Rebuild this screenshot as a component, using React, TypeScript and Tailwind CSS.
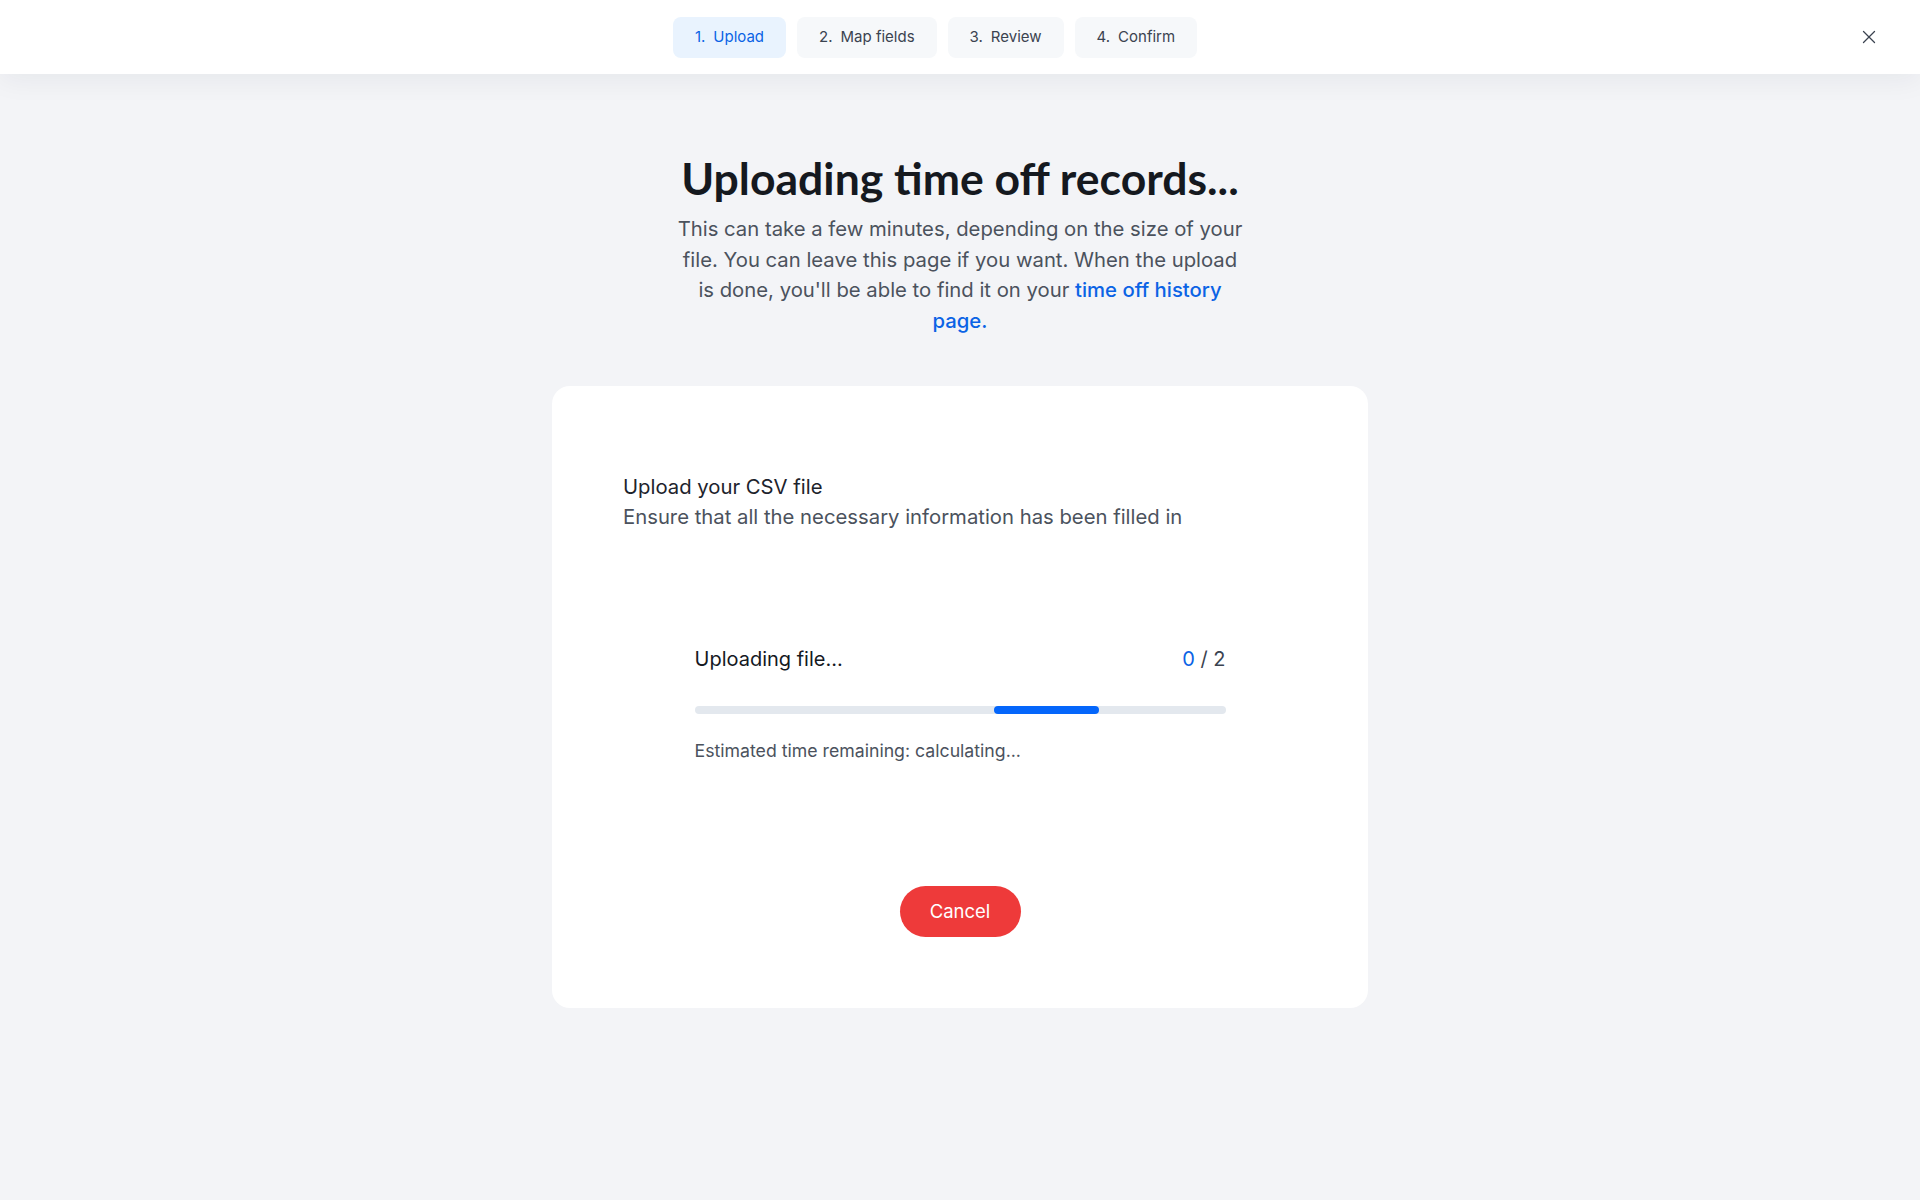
import { X } from 'lucide-react';

const steps = [
  { n: '1.', label: 'Upload', active: true },
  { n: '2.', label: 'Map fields', active: false },
  { n: '3.', label: 'Review', active: false },
  { n: '4.', label: 'Confirm', active: false },
];

function StepTabs() {
  return (
    <div className="flex items-center gap-[11px]">
      {steps.map((s) => (
        <div
          key={s.n}
          className={
            s.active
              ? 'h-[41px] px-[22px] flex items-center gap-[8px] rounded-[8px] bg-[#e9f3fe] text-[#0b63e5] text-[15px]'
              : 'h-[41px] px-[22px] flex items-center gap-[8px] rounded-[8px] bg-[#f6f8fa] text-[#3b4350] text-[15px]'
          }
        >
          <span>{s.n}</span>
          <span>{s.label}</span>
        </div>
      ))}
    </div>
  );
}

export default function App() {
  return (
    <div className="min-h-screen bg-[#f3f4f7] text-[#1d232c]" style={{ fontFamily: 'Inter, "Noto Sans", sans-serif' }}>
      <header className="relative h-[74px] bg-white flex items-center justify-center pr-[50px] shadow-[0_6px_28px_rgba(20,30,50,0.06)]">
        <StepTabs />
        <button className="absolute right-[40px] top-1/2 -translate-y-1/2 text-[#3b4350]">
          <X size={22} strokeWidth={1.4} />
        </button>
      </header>

      <main className="flex flex-col items-center pb-20">
        <h1
          className="mt-[77px] text-[44.5px] leading-[54px] font-bold text-[#15191f]"
          style={{ fontFamily: 'Lato, Inter, sans-serif' }}
        >
          Uploading time off records...
        </h1>
        <div className="mt-[9px] flex flex-col items-center text-[20.3px] leading-[30.6px] text-[#4b525d]">
          <span>This can take a few minutes, depending on the size of your</span>
          <span>file. You can leave this page if you want. When the upload</span>
          <span>
            is done, you'll be able to find it on your{' '}
            <a className="text-[#0b63e5] font-medium">time off history</a>
          </span>
          <a className="text-[#0b63e5] font-medium">page.</a>
        </div>

        <div className="mt-[50px] w-[816px] bg-white rounded-[18px] px-[71px] pt-[86px] pb-[71px]">
          <div className="text-[20.3px] leading-[30px] text-[#1d232c]">Upload your CSV file</div>
          <div className="text-[20.3px] leading-[30px] text-[#4b525d]">
            Ensure that all the necessary information has been filled in
          </div>

          <div className="mx-auto w-[531px] mt-[112px]">
            <div className="flex items-center justify-between text-[20px] leading-[30px]">
              <span className="text-[#15191f]">Uploading file...</span>
              <span className="text-[#3b4350]">
                <span className="text-[#0b63e5]">0</span> / 2
              </span>
            </div>
            <div className="mt-[32px] h-[8px] rounded-full bg-[#e3e8ee] flex">
              <div className="ml-[299px] w-[105px] h-[8px] rounded-full bg-[#0466fb]" />
            </div>
            <div className="mt-[25px] text-[17.7px] leading-[24px] text-[#4b525d]">
              Estimated time remaining: calculating...
            </div>
          </div>

          <div className="mt-[123px] flex justify-center">
            <button className="h-[51px] w-[121px] rounded-full bg-[#ee3a3a] text-white text-[18.5px]">Cancel</button>
          </div>
        </div>
      </main>
    </div>
  );
}
